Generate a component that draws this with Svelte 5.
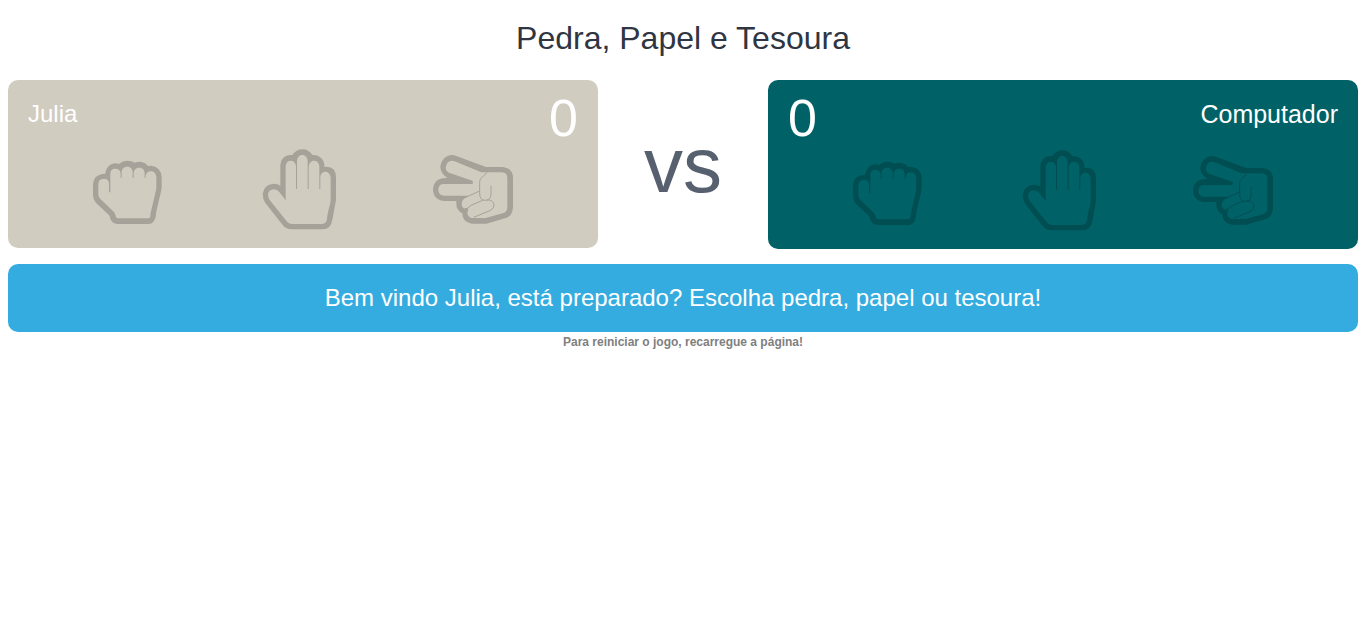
<script>
  const player = 'Julia';
  let playerScore = $state(0);
  let computerScore = $state(0);
  let picked = $state(null);
  let rival = $state(null);
  let message = $state(`Bem vindo ${player}, está preparado? Escolha pedra, papel ou tesoura!`);

  const hands = [
    { id: 'pedra', box: '33 15 240 240' },
    { id: 'papel', box: '18 15 240 240' },
    { id: 'tesoura', box: '15 15 240 240' }
  ];

  function play(index) {
    const other = Math.floor(Math.random() * 3);
    picked = index;
    rival = other;
    if (index === other) {
      message = 'Empate!';
    } else if ((index + 2) % 3 === other) {
      playerScore += 1;
      message = `${player} ganhou a rodada!`;
    } else {
      computerScore += 1;
      message = 'O computador ganhou a rodada!';
    }
  }
</script>

{#snippet hand(item)}
  <svg viewBox={item.box} aria-hidden="true">
    {#if item.id === 'pedra'}
      <path class="solid" d="M70 86C72 66 86 55 100 55Q106 55 111 57Q122 47 136 47Q149 47 158 53Q165 50 174 50Q189 51 198 63Q203 62 208 62Q238 66 239 97V127Q238 138 235 148L223 199L221 215Q216 237 198 237H107Q88 235 84 218Q84 213 80 209L43 175Q33 164 33 148V117Q36 88 66 86Z
        M85 142H81V116C81 106 75 101 65 101Q49 102 49 118V147Q49 157 56 163L93 198Q99 203 101 212Q102 220 110 220H197Q205 220 205 212Q205 203 209 191L220 144Q223 134 223 126V98C222 85 216 79 207 79C197 79 192 85 191 92V99H188V85C188 74 181 68 171 68C161 68 156 75 155 84V99H152V82C152 72 146 65 136 65C125 65 119 72 119 82V99H116V88C116 76 109 71 99 71C89 71 85 78 85 88Z" />
    {:else if item.id === 'papel'}
      <path class="solid" d="M70 122V60Q73 32 100 30H106Q117 13 137 13Q155 13 166 30Q195 29 202 56V66Q236 62 237 97V166L226 224Q222 252 197 253H104Q87 253 77 240L25 174Q17 161 17 146Q22 116 52 116Q62 116 70 122Z
        M86 166L67 141Q60 133 51 133Q36 134 33 147Q33 158 38 165L91 231Q97 237 105 237H196Q208 236 210 222Q211 208 217 185Q221 173 221 163V98C220 87 214 80 205 80C196 80 191 87 190 96V132H187V64C186 53 180 47 171 47C162 47 156 54 155 65V132H152V48C151 37 145 30 136 30C127 30 121 37 120 48V132H117V64C116 53 110 47 101 47C92 47 87 54 86 64Z" />
    {:else}
      <path class="solid" d="M174 66H221Q254 68 255 98V188Q252 215 231 220L175 236H131Q103 232 103 205Q85 196 85 177V168H47C27 167 15 152 15 133C16 113 29 101 47 100L58 98Q38 87 37 67C39 45 53 30 73 30Q78 30 85 33Z
        M160 82H221Q238 83 238 99V187Q237 200 229 203L173 219H132Q120 217 118 205Q118 199 121 194L113 192Q101 189 101 177Q101 166 109 160L122 152H47C36 151 31 144 31 133C32 123 37 117 47 117H133Q137 112 133 107L63 83Q51 77 54 64C56 53 63 47 73 47L80 49Z" />
      <path class="fold" d="M178 82L158 101Q155 105 155 112V145Q155 166 171 166Q189 166 189 147V122M155 138L109 159Q99 164 99 176M166 165L127 182Q117 187 116 202M137 217L188 196Q199 190 198 178Q193 163 176 165M110 191Q119 192 122 187" />
    {/if}
  </svg>
{/snippet}

<main>
  <h1>Pedra, Papel e Tesoura</h1>

  <div class="arena">
    <section class="card player">
      <header>
        <h2>{player}</h2>
        <output class="score">{playerScore}</output>
      </header>
      <div class="hands">
        {#each hands as item, i}
          <button class="hand" class:active={picked === i} aria-label={item.id} onclick={() => play(i)}>
            {@render hand(item)}
          </button>
        {/each}
      </div>
    </section>

    <div class="versus">vs</div>

    <section class="card computer">
      <header>
        <output class="score">{computerScore}</output>
        <h2>Computador</h2>
      </header>
      <div class="hands">
        {#each hands as item, i}
          <div class="hand" class:active={rival === i}>
            {@render hand(item)}
          </div>
        {/each}
      </div>
    </section>
  </div>

  <p class="message">{message}</p>
  <p class="note">Para reiniciar o jogo, recarregue a página!</p>
</main>

<style>
  :global(body) {
    margin: 0;
    background: #fff;
    font-family: "Liberation Sans", Arial, sans-serif;
  }

  main {
    padding: 20px 8px;
  }

  h1,
  h2,
  p {
    margin: 0;
    font-weight: 400;
  }

  h1 {
    margin-bottom: 24px;
    color: #2f3542;
    font-size: 32px;
    line-height: 36px;
    text-align: center;
  }

  .arena {
    display: grid;
    grid-template-columns: 1fr 170px 1fr;
    align-items: start;
  }

  .card {
    padding: 20px 20px 18px;
    border-radius: 10px;
    color: #fff;
  }

  .player {
    background: #d1ccc0;
  }

  .computer {
    background: #006266;
  }

  header {
    display: flex;
    align-items: flex-start;
    justify-content: space-between;
    height: 50px;
  }

  h2 {
    font-size: 24px;
    line-height: 28px;
  }

  .computer header {
    height: 51px;
  }

  .computer h2 {
    font-size: 25px;
  }

  .score {
    font-size: 52px;
    line-height: 36px;
  }

  .hands {
    display: flex;
    justify-content: center;
    gap: 90px;
  }

  .hand {
    width: 80px;
    height: 80px;
    padding: 0;
    border: 0;
    background: none;
    opacity: 0.2;
  }

  button.hand {
    cursor: pointer;
  }

  .hand:hover,
  .hand.active {
    opacity: 1;
  }

  svg {
    display: block;
    width: 100%;
    height: 100%;
    overflow: visible;
  }

  .fold {
    fill: none;
    stroke: #000;
    stroke-linejoin: round;
    stroke-width: 3px;
  }

  .solid {
    fill: #000;
    fill-rule: evenodd;
  }

  .versus {
    align-self: center;
    color: #57606f;
    font-size: 78px;
    line-height: 80px;
    text-align: center;
  }

  .message {
    margin-top: 15px;
    padding: 20px;
    border-radius: 10px;
    background: #34ace0;
    color: #fff;
    font-size: 24px;
    line-height: 28px;
    text-align: center;
  }

  .note {
    padding-top: 2px;
    color: #808080;
    font-size: 12px;
    font-weight: 700;
    line-height: 16px;
    text-align: center;
  }
</style>
